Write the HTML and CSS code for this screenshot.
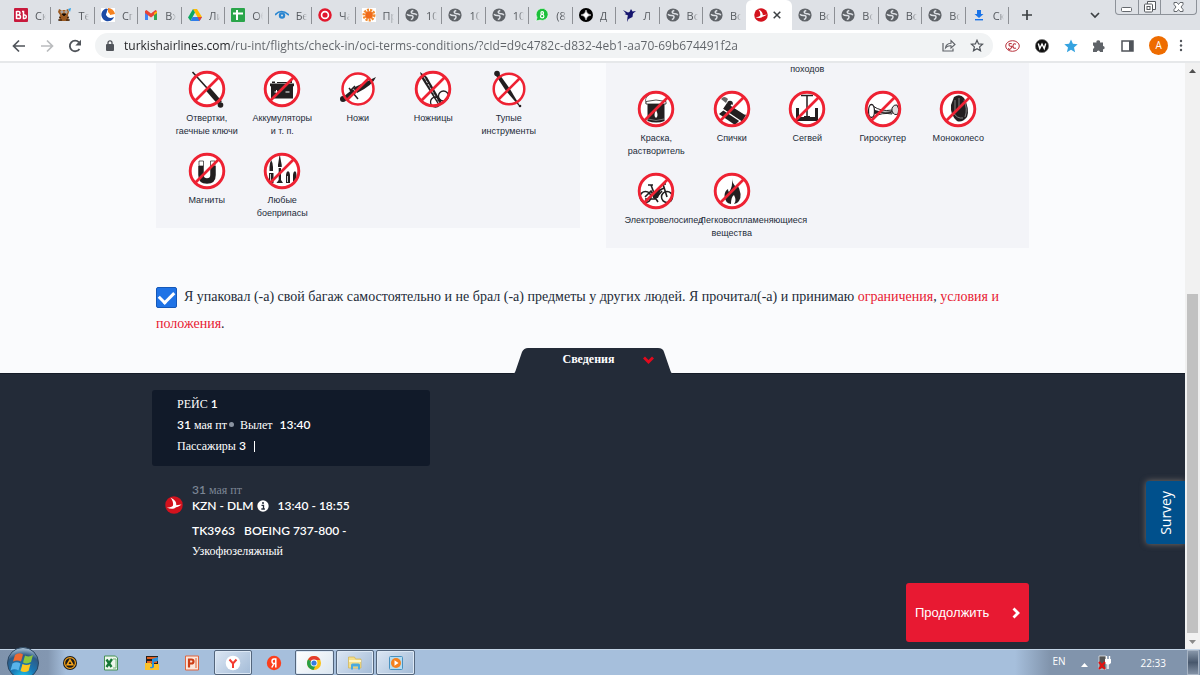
FILE: index.html
```html
<!DOCTYPE html>
<html lang="ru">
<head>
<meta charset="utf-8">
<title>Turkish Airlines</title>
<link rel="stylesheet" href="styles.css">
</head>
<body>
<svg class="defs" aria-hidden="true">
  <symbol id="globe" viewBox="0 0 14 14"><circle cx="7" cy="7" r="6.600" fill="#5f6368"/><path d="M2 6.300Q3.500 7.800 5.800 7.600T8 9.300 5.800 11.500M8.300 2.500Q5.800 3.200 6.300 4.500T9 5.700 11.800 7.300" fill="none" stroke="#dee1e6" stroke-width="1.500"/></symbol>
  <symbol id="ban" viewBox="0 0 38 38"><circle cx="19" cy="19" r="16.800" fill="none" stroke="#ee2233" stroke-width="2.900"/><path d="M7.500 30.500 30.500 7.500" stroke="#ee2233" stroke-width="2.600"/></symbol>
  <symbol id="thy" viewBox="0 0 18 18"><circle cx="9" cy="9" r="8.700" fill="#d3121d"/><path d="M5.500 1.800C10 3.500 11.500 6.500 11.300 9.200L16.500 8.500C14 10.500 12.500 11 11 11.300 8.500 13.500 5 13 1.800 11.500 5 11.500 7 11 8 9.500 8.500 7 7.500 4 5.500 1.800Z" fill="#fff"/></symbol>
</svg>

<header class="browser">
  <div class="tabstrip">
    <nav class="tabs" aria-label="Вкладки">
      <button class="tab"><svg viewBox="0 0 14 14"><rect width="14" height="14" rx="1" fill="#c8193c"/><path d="M2.500 3v8M2.500 3.500h2q1.500 0 1.500 1.600T4.500 7h-2M4.500 7q2 0 2 2T4.500 10.500h-2M8 3.500h1.500v7h1.300q1.500 0 1.500-1.700T10.800 7H9.500" fill="none" stroke="#fff" stroke-width="1.500"/></svg><span>Ск</span></button>
      <button class="tab"><svg viewBox="0 0 14 14"><path d="M2 1 4 2h5l2-1 1 3-1 3 1 6H2l1-6-2-3Z" fill="#9a5a22"/><circle cx="5" cy="4" r="1.400" fill="#fff"/><circle cx="9" cy="4" r="1.400" fill="#fff"/><circle cx="5" cy="4" r=".7"/><circle cx="9" cy="4" r=".7"/><path d="M5 6h4L7 8ZM1 12h4M9 12h4M2 9l2 1M12 9l-2 1" stroke="#221409"/><path d="m11 1 3-1-1 4Z" fill="#2aa2ea"/></svg><span>Те</span></button>
      <button class="tab"><svg viewBox="0 0 14 14"><rect width="14" height="14" fill="#fff"/><path d="M5 .5A6.500 6.500 0 1 0 13 9Q8 11.500 6 8 4.500 5 7 1Z" fill="#1b4aa6"/><path d="M7 0a7 7 0 0 1 7 6L9 7 7 4Z" fill="#f58220"/><path d="M5 6q3-3 4 1-1 4-4 0" fill="#fff"/></svg><span>Сп</span></button>
      <button class="tab"><svg viewBox="0 0 14 14"><path d="M1 12V3l3 2v7Z" fill="#4285f4"/><path d="M10 12V5l3-2v9Z" fill="#34a853"/><path d="m1 3 1.500-1L7 5.500 11.500 2 13 3v2L7 9.500 1 5Z" fill="#ea4335"/><path d="m10 5 3-2v2l-3 2Z" fill="#fbbc04"/></svg><span>Вх</span></button>
      <button class="tab"><svg viewBox="0 0 14 14"><path d="M5 1h4l5 8h-4.500Z" fill="#ffba00"/><path d="M5 1 0 9.500 2.500 13 7 4.500Z" fill="#0da960"/><path d="M4.500 9H14l-2.500 4h-9Z" fill="#2f7de9"/><path d="m9.500 9 2 4L14 9Z" fill="#ea4335"/></svg><span>Ли</span></button>
      <button class="tab"><svg viewBox="0 0 14 14"><rect width="14" height="14" rx="1" fill="#2aa54a"/><path d="M6 2v10M2 5.500h10" stroke="#fff" stroke-width="2"/></svg><span>Об</span></button>
      <button class="tab"><svg viewBox="0 0 14 14"><path d="M0 7Q6 0 14 7" fill="none" stroke="#2a86d1" stroke-width="1.700"/><circle cx="7" cy="7.500" r="3.200" fill="#2a86d1"/><circle cx="7" cy="7.500" r="1" fill="#dee1e6"/></svg><span>Бе</span></button>
      <button class="tab"><svg viewBox="0 0 14 14"><circle cx="7" cy="7" r="5.500" fill="#fff" stroke="#e2182d" stroke-width="2.500"/><circle cx="7" cy="7" r="2.600" fill="#e2182d"/></svg><span>Ча</span></button>
      <button class="tab"><svg viewBox="0 0 14 14"><rect width="14" height="14" fill="#fff"/><circle cx="7" cy="7" r="5" fill="none" stroke="#f28a2d" stroke-width="3" stroke-dasharray="2 1"/><circle cx="7" cy="7" r="3.800" fill="#ef6a1a"/></svg><span>Пр</span></button>
      <button class="tab"><svg><use href="#globe"/></svg><span>10</span></button>
      <button class="tab"><svg><use href="#globe"/></svg><span>10</span></button>
      <button class="tab"><svg><use href="#globe"/></svg><span>10</span></button>
      <button class="tab"><svg viewBox="0 0 14 14"><path d="M1 13 2 9.500A6 6 0 1 1 5 12Z" fill="#1bbf3a" stroke="#fff" stroke-width=".6"/><circle cx="7.200" cy="5" r="1.300" fill="none" stroke="#fff" stroke-width="1.200"/><circle cx="7.200" cy="8.200" r="1.700" fill="none" stroke="#fff" stroke-width="1.200"/></svg><span>(8</span></button>
      <button class="tab"><svg viewBox="0 0 14 14"><circle cx="7" cy="7" r="7"/><path d="M7 2Q7.500 6.500 12 7 7.500 7.500 7 12 6.500 7.500 2 7 6.500 6.500 7 2Z" fill="#fff" stroke="#fff" stroke-width=".5"/></svg><span>Д</span></button>
      <button class="tab"><svg viewBox="0 0 14 14"><path d="m1 2 5 2.500L7.500 4 9 1l1.500 2.500L14 3l-3 2.500L10.500 9l-4 2L5 14l.5-5L6 7.500 2.500 6 4 5.500Z" fill="#15156e"/></svg><span>Л</span></button>
      <button class="tab"><svg><use href="#globe"/></svg><span>Вс</span></button>
      <button class="tab last"><svg><use href="#globe"/></svg><span>Вс</span></button>
      <button class="tab active" aria-label="Turkish Airlines"><svg><use href="#thy"/></svg><svg class="close" viewBox="0 0 8 8"><path d="m.7.7 6.600 6.600M7.300.7.7 7.300" stroke="#3c4043" stroke-width="1.500"/></svg></button>
      <button class="tab"><svg><use href="#globe"/></svg><span>Вс</span></button>
      <button class="tab"><svg><use href="#globe"/></svg><span>Вс</span></button>
      <button class="tab"><svg><use href="#globe"/></svg><span>Вс</span></button>
      <button class="tab"><svg><use href="#globe"/></svg><span>Вс</span></button>
      <button class="tab"><svg viewBox="0 0 14 14"><path d="M5 2h4v4h2.500L7 10 2.500 6H5Z" fill="#1a73e8"/><path d="M3 11.700h8" stroke="#1a73e8" stroke-width="1.400"/></svg><span>Ск</span></button>
    </nav>
    <div class="strip-end">
      <button class="bare" aria-label="Новая вкладка"><svg width="12" height="12"><path d="M6 1v10M1 6h10" stroke="#3c4043" stroke-width="1.700"/></svg></button>
      <button class="bare list" aria-label="Поиск вкладок"><svg width="10" height="7"><path d="m1 1 4 4 4-4" fill="none" stroke="#3c4043" stroke-width="1.700"/></svg></button>
      <div class="window-buttons">
        <button aria-label="Свернуть"><svg width="12" height="6"><rect x=".5" y=".5" width="10" height="4" rx="1" fill="#fff" stroke="#65696e"/></svg></button>
        <button aria-label="Развернуть"><svg width="12" height="12"><path d="M3.500 3V.5h8v8H9" fill="#fff" stroke="#55595e"/><rect x=".5" y="3" width="8" height="8" rx="1" fill="#fff" stroke="#55595e"/><rect x="3" y="5.500" width="3" height="3" fill="none" stroke="#55595e"/></svg></button>
        <button class="wide" aria-label="Закрыть"><svg width="11" height="10"><path d="M1 .5h3L5.500 2.500 7 .5h3v2L8 5l2 2.500v2H7L5.500 7.500 4 9.500H1v-2L3 5 1 2.500Z" fill="#fff" stroke="#65696e"/></svg></button>
      </div>
    </div>
  </div>
  <div class="toolbar">
    <button class="bare nav" aria-label="Назад"><svg width="14" height="14"><path d="M13 7H2M7 1.500 1.500 7 7 12.500" fill="none" stroke="#50545a" stroke-width="1.700"/></svg></button>
    <button class="bare nav" aria-label="Вперёд"><svg width="14" height="14"><path d="M1 7h11M7 1.500 12.500 7 7 12.500" fill="none" stroke="#babcbe" stroke-width="1.700"/></svg></button>
    <button class="bare nav" aria-label="Обновить"><svg width="14" height="14"><path d="M11.500 10A5.300 5.300 0 1 1 11 3.300" fill="none" stroke="#50545a" stroke-width="1.800"/><path d="M13 .8v5.700H7.300Z" fill="#50545a"/></svg></button>
    <div class="omnibox">
      <svg width="8" height="11"><rect y="4" width="8" height="7" rx="1" fill="#50545a"/><path d="M2 4V2.800a2 2 0 0 1 4 0V4" fill="none" stroke="#50545a" stroke-width="1.300"/></svg>
      <input class="url" type="text" aria-label="Адрес" value="turkishairlines.com/ru-int/flights/check-in/oci-terms-conditions/?cId=d9c4782c-d832-4eb1-aa70-69b674491f2a">
      <button class="bare" aria-label="Поделиться"><svg width="14" height="13"><path d="M1 4v8h10V9.500" fill="none" stroke="#5f6368" stroke-width="1.200"/><path d="M3.500 9Q4 4.500 9 4.300V1.500L13 5.500 9 9V6.800Q5.500 6.500 3.500 9Z" fill="none" stroke="#5f6368" stroke-width="1.100"/></svg></button>
      <button class="bare" aria-label="В закладки"><svg width="14" height="13"><path d="m7 1.200 1.600 3.700 4 .3-3 2.700.9 3.900L7 9.700l-3.500 2.100.9-3.900-3-2.700 4-.3Z" fill="none" stroke="#50545a" stroke-width="1.200"/></svg></button>
    </div>
    <div class="extensions">
      <button class="bare" aria-label="SC"><svg width="15" height="12"><ellipse cx="7.500" cy="6" rx="6.800" ry="5.300" fill="#fff" stroke="#b8323c"/><path d="M6.800 3.800Q4 2.800 4 4.600T6 6.200 5.800 8.500 3.600 8M11 4.200Q8 2.800 8 6t3 1.900" fill="none" stroke="#b8323c" stroke-width="1.100"/></svg></button>
      <button class="bare" aria-label="W"><svg width="14" height="14"><circle cx="7" cy="7" r="6.600" fill="#111" stroke="#777" stroke-width=".8"/><path d="m3.300 4.500 1.500 5L7 5l2.200 4.500 1.500-5" fill="none" stroke="#fff" stroke-width="1.400"/></svg></button>
      <button class="bare" aria-label="Избранное"><svg width="14" height="14"><path d="m7 .5 1.900 4.300 4.800.4L10 8.400l1.100 4.800L7 10.700l-4.100 2.500L4 8.400.3 5.200l4.800-.4Z" fill="#35a3e0"/></svg></button>
      <button class="bare" aria-label="Расширения"><svg width="14" height="14"><path d="M1 3.500h3.500a1.800 1.800 0 1 1 3.500 0h3V7a1.600 1.600 0 1 1 0 3.300V13H8a1.600 1.600 0 0 0-3.200 0H1V9.800a1.700 1.700 0 0 0 0-3.300Z" fill="#5f6368"/></svg></button>
      <button class="bare" aria-label="Боковая панель"><svg width="13" height="12"><rect x="1" y="1" width="11" height="10" fill="none" stroke="#50545a" stroke-width="1.500"/><path d="M8 1h4v10H8Z" fill="#50545a"/></svg></button>
      <button class="avatar">A</button>
      <button class="bare" aria-label="Меню"><svg width="4" height="13"><circle cx="2" cy="2" r="1.200" fill="#50545a"/><circle cx="2" cy="6.500" r="1.200" fill="#50545a"/><circle cx="2" cy="11" r="1.200" fill="#50545a"/></svg></button>
    </div>
  </div>
</header>

<div class="window">
  <main class="page">
    <div class="container">
      <div class="panels">
        <ul class="panel">
          <li><svg class="pic" viewBox="0 0 38 38"><circle cx="19" cy="19" r="16.800" fill="#fff"/><path d="M4.500 2 19 18" stroke="#231f20" stroke-width="1.600"/><path d="m19 18 13 15" stroke="#231f20" stroke-width="5"/><circle cx="32.500" cy="35" r="2.800" fill="#231f20"/><use href="#ban"/></svg>Отвертки, гаечные ключи</li>
          <li><svg class="pic" viewBox="0 0 38 38"><circle cx="19" cy="19" r="16.800" fill="#fff"/><path d="M8 16h22v12.500H8ZM7 13.500h24v2.800H7ZM9 11.500h3v1.500H9ZM14 12h13v1H14ZM26 11h3v2h-3Z" fill="#231f20"/><path d="M11.500 22h4M13.500 20v4M22.500 22h4" stroke="#fff"/><use href="#ban"/></svg>Аккумуляторы и т. п.</li>
          <li><svg class="pic" viewBox="0 0 38 38"><circle cx="19" cy="19" r="16" fill="#fff"/><circle cx="4" cy="29" r="3" fill="#231f20"/><path d="m4 27 10-8 3 4-11 8ZM14 18 37 7Q34 15 18 23Z" fill="#231f20"/><path d="m10 18 9 11M11 21l5-5" stroke="#231f20" stroke-width="1.500"/><circle cx="19" cy="19" r="15.500" fill="none" stroke="#ee2233" stroke-width="2.500"/><path d="M8 30 30 8" stroke="#ee2233" stroke-width="2.500"/></svg>Ножи</li>
          <li><svg class="pic" viewBox="0 0 38 38"><circle cx="19" cy="19" r="16.800" fill="#fff"/><path d="m6 2 7 5 15 26-3 3L8 9Z" fill="#231f20"/><path d="m10 7 15 26" stroke="#fff" stroke-width=".8" stroke-dasharray="3 1"/><circle cx="21.500" cy="32" r="5" fill="none" stroke="#231f20" stroke-width="1.300"/><circle cx="29.500" cy="26" r="5" fill="none" stroke="#231f20" stroke-width="1.300"/><use href="#ban"/></svg>Ножницы</li>
          <li><svg class="pic" viewBox="0 0 38 38"><circle cx="19" cy="19" r="16" fill="#fff"/><circle cx="7" cy="3.500" r="2.800" fill="#231f20"/><path d="m5.500 5 3-2L20 19l10 17h-1L16 21Z" fill="#231f20"/><circle cx="30" cy="36" r="1.300" fill="#231f20"/><circle cx="19" cy="19" r="15.300" fill="none" stroke="#ee2233" stroke-width="2.500"/><path d="M8 30 30 8" stroke="#ee2233" stroke-width="2.500"/></svg>Тупые инструменты</li>
          <li><svg class="pic" viewBox="0 0 38 38"><circle cx="19" cy="19" r="16.800" fill="#fff"/><path d="M13 14v9q0 6 6 6t6-6v-9" fill="none" stroke="#231f20" stroke-width="5.500"/><path d="M11 9h4.500v5H11ZM22.500 9H27v5h-4.500Z" fill="#fff" stroke="#231f20" stroke-width=".7"/><use href="#ban"/></svg>Магниты</li>
          <li><svg class="pic" viewBox="0 0 38 38"><circle cx="19" cy="19" r="16.800" fill="#fff"/><path d="M6.500 15q0-4 1.700-7Q10 11 10 15v4H6.500ZM15 13l1.700-11 2 11v2H15ZM15.700 16H18v12l2 3h-6.500l2.200-3ZM6 21h4.500v10H6ZM12 20v9M23 31V23q0-3 2-4 2 1 2 4v8ZM30 30v-7q0-3 2-4 1.500 1 1.500 4v5Z" fill="#231f20"/><path d="M7.500 22v7M24.500 24v6" stroke="#fff" stroke-width=".8"/><use href="#ban"/></svg>Любые боеприпасы</li>
        </ul>
        <ul class="panel second">
          <li class="tail">походов</li>
          <li><svg class="pic" viewBox="0 0 38 38"><circle cx="19" cy="19" r="16.800" fill="#fff"/><path d="M10.500 14h17v17q-8 3-17 0Z" fill="#231f20"/><path d="M9 11.500q10-3 20 0v2.500H9Z" fill="#fff" stroke="#231f20" stroke-width=".8"/><path d="M9 14Q7 8 12 5M11 29q8 3 16 0" fill="none" stroke="#777"/><path d="M19 20q-3 6 0 8 3-2 0-8Z" fill="#fff"/><use href="#ban"/></svg>Краска, растворитель</li>
          <li><svg class="pic" viewBox="0 0 38 38"><circle cx="19" cy="19" r="16.800" fill="#fff"/><path d="m14 13 19 12-4 7-19-13Z" fill="#231f20"/><path d="m6 24 5-4 16 10-5 5Z" fill="#231f20"/><path d="m10 19.500 18 12" fill="none" stroke="#fff" stroke-width="1.300"/><path d="M8 9q3-4 7 0l-2 4Z" fill="#666"/><circle cx="17" cy="13.500" r="2.800" fill="#231f20"/><path d="m18 15 14 9" stroke="#fff" stroke-width="1.500"/><use href="#ban"/></svg>Спички</li>
          <li><svg class="pic" viewBox="0 0 38 38"><circle cx="19" cy="19" r="16.800" fill="#fff"/><path d="M13 5.500h12M19 5v21" stroke="#231f20" stroke-width="1.500"/><path d="M8 18h3v13H8ZM27 18h3v13h-3ZM11 27h5v-1h6v1h5v4H11Z" fill="#231f20"/><use href="#ban"/></svg>Сегвей</li>
          <li><svg class="pic" viewBox="0 0 38 38"><circle cx="19" cy="19" r="16.800" fill="#fff"/><path d="M9 16q8 6 19 4v4q-10-2-19 3Z" fill="#fff" stroke="#231f20"/><path d="M11 20q8 3 17 1l-1 2q-8-1-16 1Z" fill="#231f20"/><ellipse cx="7.500" cy="21" rx="3" ry="6.500" fill="#fff" stroke="#231f20" stroke-width="1.300"/><path d="M28 18q2-4 5-3 3 4 1 9-4 2-6-3Z" fill="#ddd" stroke="#231f20"/><use href="#ban"/></svg>Гироскутер</li>
          <li><svg class="pic" viewBox="0 0 38 38"><circle cx="19" cy="19" r="16.800" fill="#fff"/><path d="M15 7q6-4 10 1 6 11 3 19-5 6-10 4-7-6-6-16Z" fill="#231f20"/><path d="M16 10v12M20 8v9M25 10q4 9 1 17M14 22q4 7 10 6" fill="none" stroke="#999" stroke-width=".8"/><use href="#ban"/></svg>Моноколесо</li>
          <li><svg class="pic" viewBox="0 0 38 38"><circle cx="19" cy="19" r="16.800" fill="#fff"/><circle cx="8.500" cy="25" r="5.500" fill="none" stroke="#231f20" stroke-width="1.500"/><circle cx="30" cy="25" r="5.500" fill="none" stroke="#231f20" stroke-width="1.500"/><path d="m8 25 6-6 4 8H8M11 13h5M14 13l3 8 10-5M26 12l4 13M25 12h4M18 27l7-8M19 27l2 3" fill="none" stroke="#231f20" stroke-width="1.600"/><path d="m15 20 9-3-3 9h-5Z" fill="#231f20"/><use href="#ban"/></svg>Электровелосипед</li>
          <li><svg class="pic" viewBox="0 0 38 38"><circle cx="19" cy="19" r="16.800" fill="#fff"/><path d="M19 6q0 5 4 9 1-1 1-3 6 11 2 17-2 3-5 3 3-3 0-9-3 2-3 9-6-1-6.500-8 0-5 3.500-7 0 2 1 3 4-5 3-14Z" fill="#231f20"/><use href="#ban"/></svg>Легковоспламеняющиеся вещества</li>
        </ul>
      </div>
      <div class="agreement">
        <input type="checkbox" id="agree" checked><label for="agree">Я упаковал (-а) свой багаж самостоятельно и не брал (-а) предметы у других людей. Я прочитал(-а) и принимаю</label> <a href="#limits">ограничения</a>, <a href="#terms">условия и положения</a>.
      </div>
    </div>

    <div class="details-bar">
      <button class="details-tab"><svg class="tab-shape" width="160" height="26" viewBox="0 0 160 26"><path d="M0 26q2-1 2.500-3L9 4q2-4 6-4h130q5 0 6 4l6.500 19q.5 2 2.500 3Z" fill="#232b38"/></svg><span>Сведения</span><svg class="tab-arrow" width="11" height="8"><path d="m1 1.500 4.500 4.500L10 1.500" fill="none" stroke="#e30a1d" stroke-width="2.800"/></svg></button>
    </div>

    <section class="details">
      <div class="container details-body">
        <div class="flight-card">
          <div>РЕЙС <b>1</b></div>
          <div><b>31</b> мая пт<i class="dot"></i>Вылет <b class="time">13:40</b></div>
          <div>Пассажиры <b>3</b><i class="bar"></i></div>
        </div>
        <div class="leg">
          <svg class="carrier"><use href="#thy"/></svg>
          <div class="leg-text">
            <div class="date"><b>31</b> мая пт</div>
            <div class="route"><b>KZN - DLM</b><svg width="12" height="12"><circle cx="6" cy="6" r="5.700" fill="#fff"/><path d="M4.500 5.300h2V9M4.300 9h3.600" fill="none" stroke="#232b38" stroke-width="1.300"/><circle cx="6" cy="3" r="1" fill="#232b38"/></svg><b class="times">13:40 - 18:55</b></div>
            <div class="plane"><b>TK3963</b><b>BOEING 737-800 -</b></div>
            <div class="body-type">Узкофюзеляжный</div>
          </div>
        </div>
        <button class="continue">Продолжить<svg width="8" height="12"><path d="m1.500 1.500 4.500 4.500-4.500 4.500" fill="none" stroke="#fff" stroke-width="2.800"/></svg></button>
      </div>
    </section>
    <button class="survey">Survey</button>
  </main>
  <div class="scrollbar" aria-hidden="true">
    <svg width="15" height="14"><path d="M4 10h7L7.500 6Z" fill="#505050"/></svg>
    <div class="track"><div class="thumb"></div></div>
    <svg width="15" height="15"><path d="M4 6h7L7.500 10Z" fill="#8a8a8a"/></svg>
  </div>
</div>

<footer class="taskbar">
  <button class="start" aria-label="Пуск"><svg width="34" height="34" viewBox="0 0 34 34"><defs><radialGradient id="orb" cx=".5" cy="1" r="1"><stop offset="0" stop-color="#1fd0f4"/><stop offset=".4" stop-color="#1977b4"/><stop offset=".75" stop-color="#2e5b86"/><stop offset="1" stop-color="#b5cbdc"/></radialGradient></defs><circle cx="17" cy="17" r="15.500" fill="url(#orb)" stroke="#2b4762"/><path d="M9 9q4-3 8-.5l-2 7q-4-2-8 0Z" fill="#ee6a32"/><path d="M19 9.500q4 2 8-.5l-2 7q-4 2.500-8 .5Z" fill="#8cc63e"/><path d="M6.500 17.500q4-2.500 8 0l-2 7q-4-2.500-8 0Z" fill="#59b3ea"/><path d="M16.500 18q4 2 8 0l-2 7q-4 2-8 0Z" fill="#fbc61f"/></svg></button>
  <nav class="apps" aria-label="Приложения">
    <button aria-label="AIMP"><svg viewBox="0 0 16 16"><circle cx="8" cy="8" r="7" fill="#1b1b1b"/><circle cx="8" cy="8" r="5.400" fill="none" stroke="#f9a51a" stroke-width="1.200"/><path d="m8 4.800 2.800 4.900H5.200Z" fill="none" stroke="#f9a51a" stroke-width="1.600"/></svg></button>
    <button aria-label="Excel"><svg viewBox="0 0 16 16"><path d="M1.500 1h11l2 2v12h-13Z" fill="#edf6ec" stroke="#459253"/><path d="M10 4h3v9h-3" fill="none" stroke="#72b47b"/><path d="m3.500 4.500 5 7.500M9 4l-5.500 8" stroke="#157635" stroke-width="2.400"/></svg></button>
    <button aria-label="Проигрыватель"><svg viewBox="0 0 16 16"><path d="M2 1h12v8H2Z" fill="#26201c"/><path d="M3 3h10M3 7h10" stroke="#e2601f" stroke-width="2"/><path d="M1 8h6l1 1h7v6H1Z" fill="#fbc22a"/><path d="M8 12V4l6-2v4l-4 1v5q-1 2-4 1 0-2 2-1Z" fill="#2a91dc"/></svg></button>
    <button aria-label="PowerPoint"><svg viewBox="0 0 16 16"><path d="M1.500 1h13v14h-13Z" fill="#fbe6dc" stroke="#e1643d"/><path d="M12 3v10" stroke="#eda387" stroke-width="2"/><path d="M5 12.500V4.500h2.500q2 0 2 2t-2 2H5" fill="none" stroke="#cc3d15" stroke-width="2.200"/></svg></button>
    <button class="open" aria-label="Яндекс Браузер"><svg viewBox="0 0 16 16"><circle cx="8" cy="8" r="7.300" fill="#fff"/><path d="m4.500 4.500 3.500 4 3.500-4M8 8v5" fill="none" stroke="#f43b31" stroke-width="2"/></svg></button>
    <button aria-label="Яндекс"><svg viewBox="0 0 16 16"><circle cx="8" cy="8" r="7.200" fill="#fc3f1d"/><path d="M9.800 12.500V4H8q-2 0-2 2.300t2 2.300h1.500M8 8.500 5.800 12.500" fill="none" stroke="#fff" stroke-width="1.500"/></svg></button>
    <button class="open current" aria-label="Chrome"><svg viewBox="0 0 16 16"><circle cx="8" cy="8" r="7" fill="#fbc116"/><path d="M8 8 2 4.500A7 7 0 0 1 14.300 5H8Z" fill="#e33b2e"/><path d="M8 8 2 4.500A7 7 0 0 0 7.500 15L10 9.500Z" fill="#269f47"/><circle cx="8" cy="8" r="3.400" fill="#fff"/><circle cx="8" cy="8" r="2.600" fill="#377ce0"/></svg></button>
    <button class="open" aria-label="Проводник"><svg viewBox="0 0 16 16"><path d="M1.500 2h6l1 2H14v9H1.500Z" fill="#f4df8b" stroke="#d3b14e" stroke-width=".7"/><path d="M2 6h12" stroke="#fff5c4" stroke-width="2"/><path d="M4 14.500V10q0-1.500 1.500-1.500h6Q13 8.500 13 10v4.500h-2v-3H6v3Z" fill="#4ba9de"/></svg></button>
    <button class="open" aria-label="Медиаплеер"><svg viewBox="0 0 16 16"><rect x="1.500" y="1.500" width="13" height="13" rx="1" fill="#b4dcf1" stroke="#4791c0"/><circle cx="8" cy="8" r="5" fill="#f4811f"/><path d="m6.500 5.300 4 2.700-4 2.700Z" fill="#fff"/></svg></button>
  </nav>
  <div class="tray">
    <span>EN</span>
    <svg width="7" height="4"><path d="M0 4h7L3.500 0Z" fill="#fff"/></svg>
    <svg width="14" height="15" viewBox="0 0 14 15"><path d="M1 1h7v13H1Z" fill="#555" stroke="#eee" stroke-width=".7"/><path d="M7 4h6v4q-3 3-6 0Z" fill="#fff"/><path d="M8.500 1v3M11.500 1v3M10 9v5" stroke="#fff" stroke-width="1.400"/><path d="m1 7 6 7M7 7l-6 7" stroke="#e3100f" stroke-width="2"/></svg>
    <time>22:33</time>
  </div>
  <button class="show-desktop" aria-label="Свернуть все окна"></button>
</footer>
</body>
</html>
```
FILE: styles.css
```css
* { box-sizing: border-box; }

body {
  margin: 0;
  height: 100vh;
  display: flex;
  flex-direction: column;
  overflow: hidden;
  font-family: "Liberation Serif", serif;
  color: #232b38;
}

button {
  border: 0;
  padding: 0;
  margin: 0;
  background: none;
  font: inherit;
  color: inherit;
}

svg { flex: none; display: block; }
.defs { position: absolute; width: 0; height: 0; }

.browser { font-family: "Open Sans", sans-serif; }

.tabstrip {
  display: flex;
  height: 30px;
  background: #dee1e6;
}

.tabs {
  flex: 1;
  display: flex;
  padding-left: 8px;
  min-width: 0;
}

.tab {
  flex: 1 1 0;
  min-width: 0;
  display: flex;
  align-items: center;
  gap: 7px;
  padding-left: 6px;
  font-size: 11px;
  color: #55595e;
  position: relative;
}

.tab svg { width: 14px; height: 14px; }
.tab span {
  width: 11px;
  overflow: hidden;
  text-align: left;
  white-space: nowrap;
  -webkit-mask-image: linear-gradient(90deg, #000 50%, transparent);
  mask-image: linear-gradient(90deg, #000 50%, transparent);
}
.tab::after {
  content: "";
  position: absolute;
  right: 0;
  top: 7px;
  height: 17px;
  width: 1px;
  background: #8d9095;
}
.tab.last::after, .tab.active::after { display: none; }
.tab.active {
  background: #fff;
  border-radius: 6px 6px 0 0;
  padding-left: 8px;
}
.tab.active svg.close { width: 8px; height: 8px; margin-left: -2px; }

.strip-end {
  width: 191px;
  display: flex;
  align-items: center;
  padding: 0 3px 0 12px;
}
.bare { display: flex; align-items: center; justify-content: center; }
.list { margin: 0 auto; padding-left: 41px; }

.window-buttons {
  align-self: flex-start;
  display: flex;
  height: 15px;
  border: 1px solid #8d9299;
  border-top: 0;
  border-radius: 0 0 4px 4px;
}
.window-buttons button {
  width: 22px;
  display: flex;
  align-items: center;
  justify-content: center;
}
.window-buttons button + button { border-left: 1px solid #8d9299; }
.window-buttons button:first-child { padding-top: 5px; }
.window-buttons .wide { width: 36px; }

.toolbar {
  height: 33px;
  display: flex;
  align-items: center;
  background: #fff;
  border-bottom: 2px solid #e6e8ea;
  padding-left: 5px;
}
.nav { width: 28px; }

.omnibox {
  flex: 1;
  display: flex;
  align-items: center;
  height: 25px;
  margin-left: 6px;
  padding: 0 9px 0 11px;
  border-radius: 13px;
  background: #f1f3f4;
}
.url {
  flex: 1;
  min-width: 0;
  margin-left: 10px;
  padding: 0;
  border: 0;
  outline: 0;
  font: 12px "Open Sans", sans-serif;
  color: transparent;
  background: linear-gradient(90deg, #202124 107px, #5f6368 107px);
  -webkit-background-clip: text;
  background-clip: text;
}
.omnibox .bare + .bare { margin-left: 14px; }

.extensions {
  width: 207px;
  display: flex;
  align-items: center;
  justify-content: space-between;
  padding: 0 17px 0 12px;
}
.avatar {
  width: 19px;
  height: 19px;
  border-radius: 50%;
  background: #ee6c00;
  color: #fff;
  font-size: 10px;
  line-height: 19px;
}
.avatar + .bare { margin-left: -4px; }

.window {
  flex: 1;
  min-height: 0;
  display: flex;
}

.page {
  flex: 1;
  min-width: 0;
  position: relative;
  display: flex;
  flex-direction: column;
  overflow: hidden;
  background: #fafbfd;
}

.container {
  width: 100%;
  max-width: 873px;
  margin: 0 auto;
}

.panels {
  display: grid;
  grid-template-columns: 1fr 1fr;
  gap: 26px;
  align-items: start;
}

.panel {
  margin: 0;
  padding: 7px 33px 8px 13px;
  list-style: none;
  display: grid;
  grid-template-columns: repeat(5, minmax(0, 1fr));
  row-gap: 14px;
  background: #f3f4f8;
  font: 9px/13px "Liberation Sans", sans-serif;
}
.panel li {
  min-height: 68px;
  padding: 0 6px;
  text-align: center;
}
.panel.second { padding-top: 0; }
.panel .tail { grid-column: 3; min-height: 13px; }
.panel .tail + li { grid-column: 1; }
.pic {
  width: 38px;
  height: 38px;
  margin: 0 auto 4px;
  overflow: visible;
}

.agreement {
  padding-top: 35px;
  font-size: 14px;
  line-height: 27px;
}
.agreement input {
  appearance: none;
  width: 21px;
  height: 21px;
  margin: 0 7px 0 0;
  vertical-align: middle;
  border: 1px solid #1558b8;
  border-radius: 2px;
  background: #1f73e6;
  display: inline-grid;
  place-items: center;
}
.agreement input:checked::before {
  content: "";
  width: 12px;
  height: 7px;
  margin-top: -4px;
  border: solid #fff;
  border-width: 0 0 3px 3px;
  rotate: -45deg;
}
.agreement a { color: #e81932; text-decoration: none; }

.details-bar {
  display: flex;
  justify-content: center;
  margin-top: 11px;
}
.details-tab {
  width: 160px;
  height: 25px;
  display: flex;
  align-items: center;
  justify-content: flex-end;
  gap: 28px;
  padding: 0 19px 2px 0;
  position: relative;
  color: #fff;
  font-size: 12px;
  font-weight: bold;
}
.tab-shape { position: absolute; left: 0; top: 0; }
.details-tab span, .tab-arrow { position: relative; }

.details {
  flex: 1;
  display: flex;
  border-top: 1px solid #151c28;
  background: #232b38;
  color: #fff;
  font-size: 12px;
}
.details b {
  font-family: Lato, sans-serif;
  font-weight: 600;
  line-height: 16px;
}
.details-body {
  display: flex;
  flex-direction: column;
  padding: 16px 0 7px;
}

.flight-card {
  width: 278px;
  margin-left: -4px;
  padding: 4px 25px 9px;
  border-radius: 3px;
  background: #111a29;
  line-height: 21px;
  -webkit-text-stroke: 0;
}
.dot {
  display: inline-block;
  width: 5px;
  height: 5px;
  margin: 0 6px 2px 2px;
  border-radius: 50%;
  background: #8a93a0;
}
.time { margin-left: 4px; }
.bar {
  display: inline-block;
  width: 1px;
  height: 11px;
  margin-left: 8px;
  vertical-align: -2px;
  background: #fff;
}

.leg {
  display: flex;
  gap: 9px;
  padding: 16px 0 0 9px;
}
.carrier { width: 18px; height: 18px; margin-top: 14px; }
.date { color: #7b8594; line-height: 16px; }
.route { display: flex; align-items: center; line-height: 16px; }
.route svg { margin-left: 3px; }
.times { margin-left: 9px; }
.plane { display: flex; gap: 9px; line-height: 16px; margin-top: 9px; }
.body-type { line-height: 16px; margin-top: 4px; }

.continue {
  align-self: flex-end;
  width: 123px;
  height: 59px;
  margin-top: auto;
  padding: 0 9px;
  display: flex;
  align-items: center;
  justify-content: space-between;
  border-radius: 3px;
  background: #e81932;
  font: 13px "Liberation Sans", sans-serif;
}

.survey {
  position: absolute;
  right: 0;
  top: 418px;
  width: 39px;
  height: 63px;
  border-radius: 3px 0 0 3px;
  background: #00508c;
  box-shadow: 0 0 6px #77706c;
  color: #fff;
  font: 14px "Open Sans", sans-serif;
  writing-mode: sideways-lr;
}

.scrollbar {
  width: 15px;
  display: flex;
  flex-direction: column;
  background: #f1f1f1;
}
.track {
  flex: 1;
  display: flex;
  align-items: flex-end;
  padding: 0 2px 1px;
}
.thumb { width: 100%; height: 61%; background: #c1c1c1; }

.taskbar {
  height: 26px;
  display: flex;
  align-items: center;
  border-top: 1px solid #c3d4e6;
  background: linear-gradient(90deg, #7f93ac 0, #8397b1 48px, #a6bfdc 66px, #a6bfdc calc(100% - 185px), #8194ac calc(100% - 150px), #8194ac 100%);
  font: 10px "Open Sans", sans-serif;
  color: #fff;
}
.start { width: 51px; display: flex; padding-left: 6px; }
.start svg { position: relative; margin: -6px 0; }
.apps {
  width: 364px;
  height: 25px;
  display: grid;
  grid-template-columns: repeat(9, 1fr);
  column-gap: 2px;
}
.apps button {
  display: grid;
  place-items: center;
  border: 1px solid transparent;
  border-radius: 2px;
}
.apps svg { width: 16px; height: 16px; }
.apps .open {
  border-color: #53657c;
  background: linear-gradient(135deg, #dbe6f3, #a3bbd7);
  box-shadow: inset 0 0 0 1px #dce8f5;
}
.apps .current { background: linear-gradient(135deg, #fff, #dbe6f0); }

.tray {
  margin-left: auto;
  display: flex;
  align-items: center;
}
.tray > svg:nth-of-type(1) { margin: 4px 10px 0 15px; }
.tray time { margin-left: 29px; }
.tray span { margin-top: -4px; }
.show-desktop {
  width: 12px;
  height: 25px;
  margin: 0 1px 0 21px;
  border: 1px solid #a7b4c4;
  background: linear-gradient(#8796a9, #48586d 50%, #8291a5);
}
```
